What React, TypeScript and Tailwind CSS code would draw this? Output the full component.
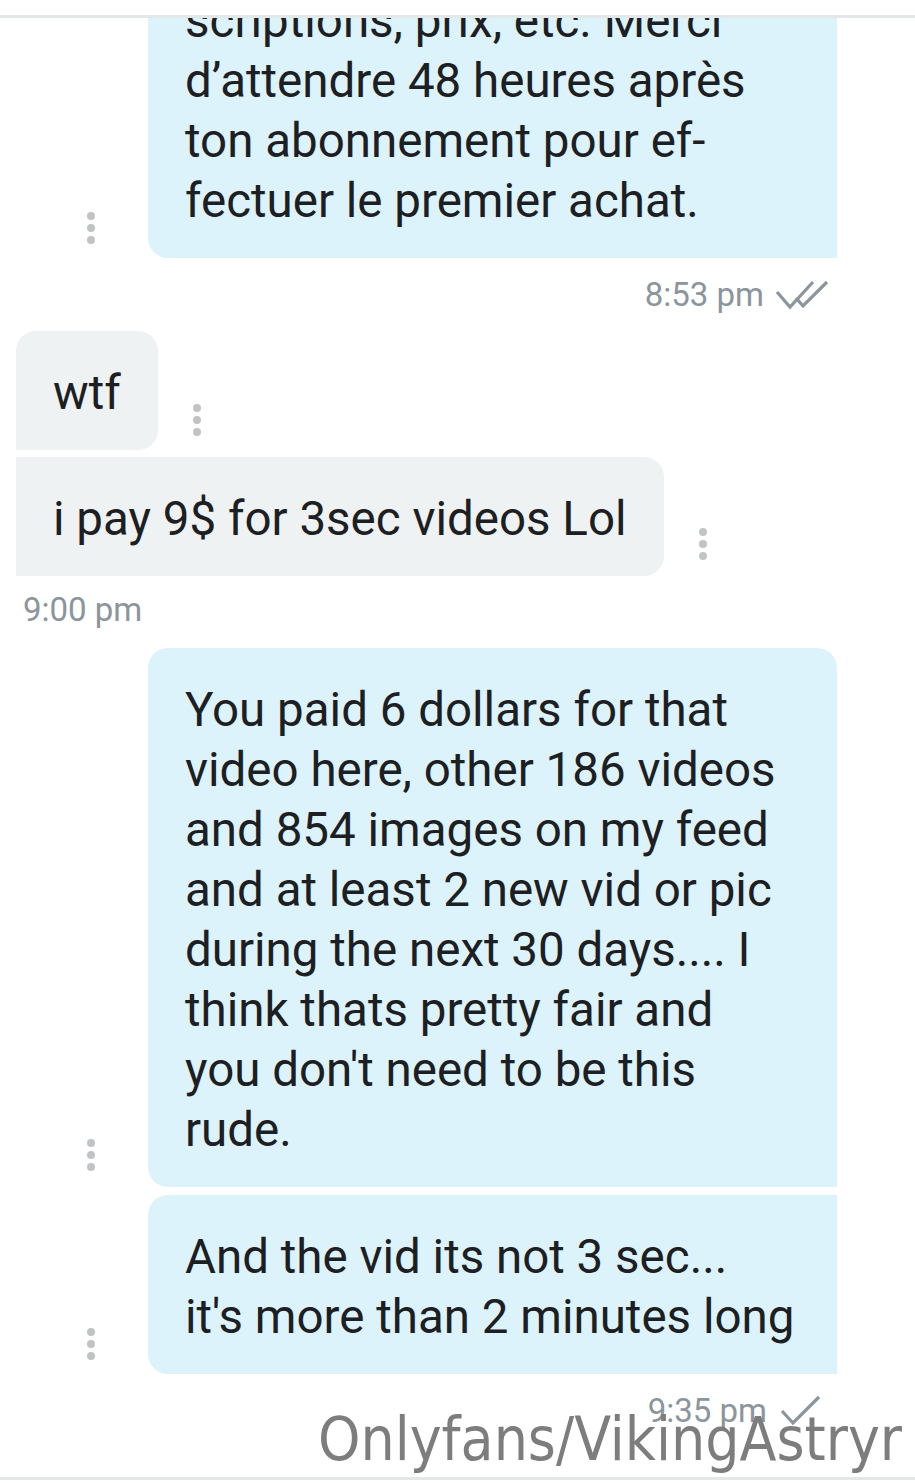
import React from 'react';

/**
 * A single chat message bubble
 */
interface Message {
  id: number;
  mine: boolean;
  lines: string[];
  bubbleClass: string;
}

const Dots: React.FC<{ className?: string }> = ({ className = '' }) => (
  <div className={`flex flex-col gap-[4px] ${className}`}>
    <span className="block w-[8px] h-[8px] rounded-full bg-[#c0c4c7]" />
    <span className="block w-[8px] h-[8px] rounded-full bg-[#c0c4c7]" />
    <span className="block w-[8px] h-[8px] rounded-full bg-[#c0c4c7]" />
  </div>
);

const DoubleCheck: React.FC = () => (
  <svg width="56" height="32" viewBox="0 0 56 32" fill="none" stroke="#8a959c" strokeWidth={3.2}>
    <path d="M3 13 L16 28 L39 3" />
    <path d="M22 19 L29 27 L53 3" />
  </svg>
);

const SingleCheck: React.FC = () => (
  <svg width="44" height="32" viewBox="0 0 44 32" fill="none" stroke="#8a959c" strokeWidth={3.2}>
    <path d="M3 16 L14 28 L40 2" />
  </svg>
);

const Bubble: React.FC<{ msg: Message }> = ({ msg }) => {
  const base = msg.mine ? 'bg-[#dcf3fc] w-[689px]' : 'bg-[#eff2f3]';
  return (
    <div className={`${base} ${msg.bubbleClass} pl-[37px] pr-[37px] pt-[32px] pb-[27px] text-[47.5px] leading-[60px] text-[#1c2023]`}>
      {msg.lines.map((line, i) => (
        <div key={i} className="whitespace-nowrap">
          {line}
        </div>
      ))}
    </div>
  );
};

const App: React.FC = () => {
  const first: Message = {
    id: 1,
    mine: true,
    lines: ['scriptions, prix, etc. Merci', 'd\u2019attendre 48 heures après', 'ton abonnement pour ef-', 'fectuer le premier achat.'],
    bubbleClass: 'rounded-bl-[20px]',
  };
  const wtf: Message = { id: 2, mine: false, lines: ['wtf'], bubbleClass: 'rounded-tl-[20px] rounded-r-[20px]' };
  const pay: Message = { id: 3, mine: false, lines: ['i pay 9$ for 3sec videos Lol'], bubbleClass: 'rounded-r-[20px]' };
  const paid: Message = {
    id: 4,
    mine: true,
    lines: [
      'You paid 6 dollars for that',
      'video here, other 186 videos',
      'and 854 images on my feed',
      'and at least 2 new vid or pic',
      'during the next 30 days.... I',
      'think thats pretty fair and',
      "you don't need to be this",
      'rude.',
    ],
    bubbleClass: 'rounded-l-[20px] rounded-tr-[20px]',
  };
  const vid: Message = {
    id: 5,
    mine: true,
    lines: ['And the vid its not 3 sec...', "it's more than 2 minutes long"],
    bubbleClass: 'rounded-l-[20px]',
  };

  return (
    <div className="relative w-[915px] h-[1483px] overflow-hidden bg-white font-['Roboto',_sans-serif]">
      <div className="h-[15px]" />
      <div className="h-[3px] bg-[#e4e7e8]" />

      {/* Message list */}
      <div className="h-[1459px] overflow-hidden">
        {/* cut-off first message */}
        <div className="flex items-end pl-[87px] mt-[-59px]">
          <Dots className="mb-[14px]" />
          <div className="ml-[53px]">
            <Bubble msg={first} />
          </div>
        </div>
        <div className="flex items-center justify-end gap-[10px] pr-[85px] pt-[21px] mb-[21px] h-[52px] text-[33px] text-[#8a959c]">
          <span>8:53 pm</span>
          <DoubleCheck />
        </div>

        {/* received */}
        <div className="flex items-end pl-[16px]">
          <Bubble msg={wtf} />
          <Dots className="ml-[35px] mb-[14px]" />
        </div>
        <div className="flex items-end pl-[16px] mt-[7px]">
          <Bubble msg={pay} />
          <Dots className="ml-[35px] mb-[16px]" />
        </div>
        <div className="pl-[23px] pt-[19px] mb-[23px] h-[49px] text-[33px] leading-[30px] text-[#8a959c]">
          9:00 pm
        </div>

        {/* sent */}
        <div className="flex items-end pl-[87px]">
          <Dots className="mb-[16px]" />
          <div className="ml-[53px]">
            <Bubble msg={paid} />
          </div>
        </div>
        <div className="flex items-end pl-[87px] mt-[8px]">
          <Dots className="mb-[14px]" />
          <div className="ml-[53px]">
            <Bubble msg={vid} />
          </div>
        </div>
        <div className="flex items-center justify-end gap-[12px] pr-[92px] pt-[22px] h-[52px] text-[33px] text-[#8a959c]">
          <span>9:35 pm</span>
          <SingleCheck />
        </div>
      </div>

      <div className="absolute left-0 right-0 top-[1477px] h-[3px] bg-[#e4e7e8]" />

      {/* watermark */}
      <div className="absolute right-[13px] top-[1399px] text-[60px] leading-[80px] text-[#7d7d7d] font-['DejaVu_Sans_Condensed','DejaVu_Sans',sans-serif] whitespace-nowrap">
        Onlyfans/VikingAstryr
      </div>
    </div>
  );
};

export default App;
